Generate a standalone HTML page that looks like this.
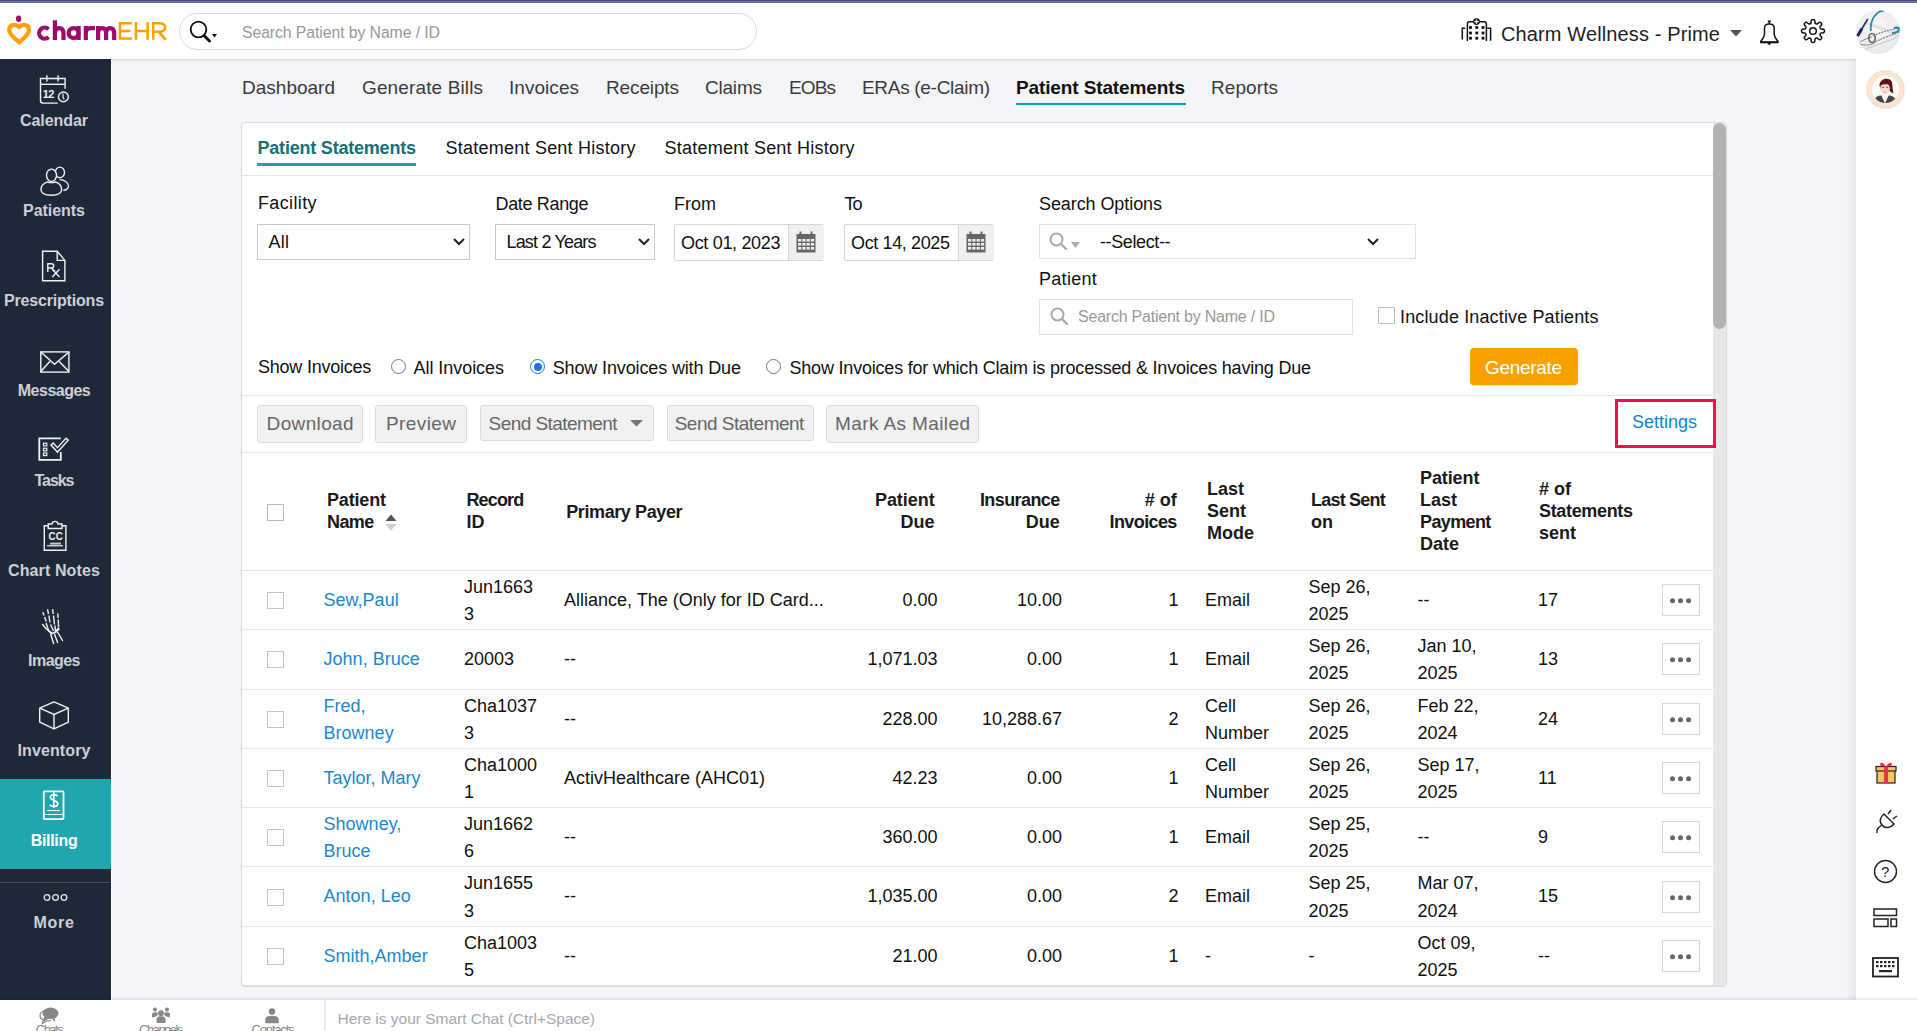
<!DOCTYPE html>
<html><head><meta charset="utf-8"><style>
html,body{margin:0;padding:0;}
body{width:1917px;height:1031px;position:relative;overflow:hidden;background:#f4f5f9;font-family:"Liberation Sans", sans-serif;}
.t{position:absolute;white-space:pre;line-height:1;}
svg{position:absolute;overflow:visible;}
</style></head><body>
<div style="position:absolute;left:0px;top:0px;width:1917px;height:1px;background:#4a4d7c;"></div>
<div style="position:absolute;left:0px;top:1px;width:1917px;height:1px;background:#72759b;"></div>
<div style="position:absolute;left:0px;top:2px;width:1917px;height:1px;background:#6a6c93;"></div>
<div style="position:absolute;left:0px;top:3px;width:1917px;height:56px;background:#fff;"></div>
<div style="position:absolute;left:0px;top:59px;width:1917px;height:1px;background:#e0e0e3;"></div>
<div style="position:absolute;left:0px;top:60px;width:1917px;height:3px;background:linear-gradient(#ebebee,#f4f5f9);"></div>
<div style="position:absolute;left:0px;top:59px;width:111px;height:941px;background:#1d2839;"></div>
<div style="position:absolute;left:111px;top:59px;width:1px;height:941px;background:#fff;"></div>
<div style="position:absolute;left:0px;top:779px;width:111px;height:90px;background:#20a7ad;"></div>
<div style="position:absolute;left:0px;top:882px;width:111px;height:1px;background:#4b4a4d;"></div>
<div style="position:absolute;left:1846px;top:59px;width:10px;height:941px;background:linear-gradient(90deg,rgba(0,0,0,0),rgba(0,0,0,0.06));"></div>
<div style="position:absolute;left:1856px;top:59px;width:61px;height:941px;background:#fff;"></div>
<div style="position:absolute;left:0px;top:995px;width:1917px;height:5px;background:linear-gradient(rgba(0,0,0,0),rgba(0,0,0,0.035) 60%,rgba(0,0,0,0.09));"></div>
<div style="position:absolute;left:0px;top:1000px;width:1917px;height:31px;background:#fff;"></div>
<div style="position:absolute;left:324px;top:1000px;width:2px;height:31px;background:#ececf0;"></div>
<svg style="left:4px;top:12px" width="30" height="36" viewBox="0 0 30 36">
<ellipse cx="14.6" cy="6.8" rx="2.6" ry="3.3" fill="#9d0a6c"/>
<path d="M15.2 15 C 12 11.5, 5.2 12, 5.2 18 C 5.2 22.5, 11 26.8, 15.3 30.3 C 19.5 26.8, 25 22.5, 25 18 C 25 12, 18.5 11.5, 15.2 15 Z" fill="none" stroke="#ffa000" stroke-width="4.2" stroke-linejoin="round"/>
</svg>
<svg style="left:34px;top:15px" width="140" height="30" viewBox="0 0 140 30" fill="none" stroke-linecap="butt">
<g stroke="#9d0a6c" stroke-width="4.2">
<path d="M14.5 14.2 A5.5 5.5 0 1 0 14.5 22"/>
<path d="M20.9 5.3 V25 M20.9 19 Q 20.9 13.1, 25.2 13.1 Q 29.5 13.1, 29.5 19 V25"/>
<circle cx="39.6" cy="18.1" r="4.95"/><path d="M44.6 11 V25"/>
<path d="M51.8 11 V25 M51.8 18.5 Q 51.8 13.1, 56.5 13.1 H 61"/>
<path d="M64.1 11 V25 M64.1 18.5 Q 64.1 13.1, 68.1 13.1 Q 72.1 13.1, 72.1 18.5 V25 M72.1 18.5 Q 72.1 13.1, 76.1 13.1 Q 80.2 13.1, 80.2 18.5 V25"/>
</g>
<g stroke="#ffa000" stroke-width="2.5">
<path d="M97.9 8.35 H85.95 V23.55 H97.9 M85.95 15.9 H96.5"/>
<path d="M101.95 7.1 V24.8 M113.65 7.1 V24.8 M101.95 15.9 H113.65"/>
<path d="M119.25 24.8 V8.35 H125 C 129.8 8.35, 131.2 10.5, 131.2 12.6 C 131.2 15, 129.5 16.7, 125 16.7 H119.25 M124.5 16.7 L131.9 24.8"/>
</g></svg>
<div style="position:absolute;left:179px;top:13px;width:578px;height:37px;box-sizing:border-box;border:1px solid #d8d8e0;border-radius:18.5px;background:#fff;"></div>
<svg style="left:189px;top:20px" width="30" height="24" viewBox="0 0 30 24">
<circle cx="9.5" cy="9.5" r="7.8" fill="none" stroke="#111" stroke-width="1.8"/>
<line x1="15" y1="15.5" x2="20.5" y2="21" stroke="#111" stroke-width="3" stroke-linecap="round"/>
<path d="M23 14 L28 14 L25.5 17.5 Z" fill="#111"/>
</svg>
<div class="t" id="t0" style="left:242px;top:25.03px;font-size:15.8px;font-weight:400;color:#999;letter-spacing:-0.084px;">Search Patient by Name / ID</div>
<svg style="left:1455px;top:12px" width="45" height="36" viewBox="0 0 45 36" fill="none" stroke="#111" stroke-width="1.5">
<path d="M12.4 29 V12 Q12.4 9.8 14.6 9.8 H29.2 Q31.4 9.8 31.4 12 V29"/>
<path d="M7.3 27.6 V16.2 H10.2 M35.6 28.8 V16.2 H32.3"/>
<circle cx="21.5" cy="9.6" r="3.4" fill="#111" stroke="none"/><path d="M21.5 7.4 V11.8 M19.3 9.6 H23.7" stroke="#fff" stroke-width="1.3"/>
<g fill="#111" stroke="none"><rect x="14.1" y="14.1" width="2.8" height="2.8"/><rect x="20.4" y="14.1" width="2.8" height="2.8"/><rect x="26.6" y="14.1" width="2.8" height="2.8"/>
<rect x="14.1" y="19.6" width="2.8" height="2.8"/><rect x="20.4" y="19.6" width="2.8" height="2.8"/><rect x="26.6" y="19.6" width="2.8" height="2.8"/>
<rect x="14.1" y="24.8" width="2.8" height="2.8"/><rect x="20.4" y="24.8" width="2.8" height="2.8"/><rect x="26.6" y="24.8" width="2.8" height="2.8"/></g>
</svg>
<div class="t" id="t1" style="left:1501px;top:24.07px;font-size:20px;font-weight:400;color:#222;letter-spacing:0.126px;">Charm Wellness - Prime</div>
<svg style="left:1730px;top:30px" width="12" height="7" viewBox="0 0 12 7"><path d="M0 0 H12 L6 6.5 Z" fill="#555"/></svg>
<svg style="left:1750px;top:12px" width="40" height="36" viewBox="0 0 40 36" fill="none" stroke="#111" stroke-width="1.5">
<path d="M19.3 9.3 V12 M17.8 9.3 H20.8" stroke-width="1.6"/>
<path d="M19.3 12 C 15.5 12, 14.5 13.5, 14.5 16 V22 C 14.5 24.5, 13 26.5, 10.7 29.5 V30.3 H28 V29.5 C 25.7 26.5, 24.2 24.5, 24.2 22 V16 C 24.2 13.5, 23 12, 19.3 12 Z" stroke-width="1.5"/>
<path d="M10.7 30.3 H28" stroke-width="2"/>
<path d="M18 30.5 L19.3 32.3 L20.6 30.5" stroke-width="1.4"/>
</svg>
<svg style="left:1801.4px;top:19.3px" width="24" height="24" viewBox="0 0 24 24" fill="none" stroke="#111" stroke-width="1.5">
<path d="M19.21 14.98 L19.13 15.17 L19.06 15.37 L19.00 15.57 L18.98 15.79 L19.03 16.06 L19.26 16.45 L19.70 17.00 L20.26 17.67 L20.65 18.28 L20.79 18.74 L20.75 19.09 L20.63 19.37 L20.46 19.61 L20.27 19.84 L20.06 20.06 L19.84 20.27 L19.61 20.46 L19.37 20.63 L19.09 20.75 L18.74 20.79 L18.28 20.65 L17.67 20.26 L17.00 19.70 L16.45 19.26 L16.06 19.03 L15.79 18.98 L15.57 19.00 L15.37 19.06 L15.17 19.13 L14.98 19.21 L14.80 19.29 L14.61 19.37 L14.43 19.47 L14.26 19.61 L14.10 19.85 L13.99 20.27 L13.91 20.98 L13.83 21.85 L13.67 22.56 L13.45 22.98 L13.18 23.20 L12.89 23.31 L12.60 23.36 L12.30 23.39 L12.00 23.40 L11.70 23.39 L11.40 23.36 L11.11 23.31 L10.82 23.20 L10.55 22.98 L10.33 22.56 L10.17 21.85 L10.09 20.98 L10.01 20.27 L9.90 19.85 L9.74 19.61 L9.57 19.47 L9.39 19.37 L9.20 19.29 L9.02 19.21 L8.83 19.13 L8.63 19.06 L8.43 19.00 L8.21 18.98 L7.94 19.03 L7.55 19.26 L7.00 19.70 L6.33 20.26 L5.72 20.65 L5.26 20.79 L4.91 20.75 L4.63 20.63 L4.39 20.46 L4.16 20.27 L3.94 20.06 L3.73 19.84 L3.54 19.61 L3.37 19.37 L3.25 19.09 L3.21 18.74 L3.35 18.28 L3.74 17.67 L4.30 17.00 L4.74 16.45 L4.97 16.06 L5.02 15.79 L5.00 15.57 L4.94 15.37 L4.87 15.17 L4.79 14.98 L4.71 14.80 L4.63 14.61 L4.53 14.43 L4.39 14.26 L4.15 14.10 L3.73 13.99 L3.02 13.91 L2.15 13.83 L1.44 13.67 L1.02 13.45 L0.80 13.18 L0.69 12.89 L0.64 12.60 L0.61 12.30 L0.60 12.00 L0.61 11.70 L0.64 11.40 L0.69 11.11 L0.80 10.82 L1.02 10.55 L1.44 10.33 L2.15 10.17 L3.02 10.09 L3.73 10.01 L4.15 9.90 L4.39 9.74 L4.53 9.57 L4.63 9.39 L4.71 9.20 L4.79 9.02 L4.87 8.83 L4.94 8.63 L5.00 8.43 L5.02 8.21 L4.97 7.94 L4.74 7.55 L4.30 7.00 L3.74 6.33 L3.35 5.72 L3.21 5.26 L3.25 4.91 L3.37 4.63 L3.54 4.39 L3.73 4.16 L3.94 3.94 L4.16 3.73 L4.39 3.54 L4.63 3.37 L4.91 3.25 L5.26 3.21 L5.72 3.35 L6.33 3.74 L7.00 4.30 L7.55 4.74 L7.94 4.97 L8.21 5.02 L8.43 5.00 L8.63 4.94 L8.83 4.87 L9.02 4.79 L9.20 4.71 L9.39 4.63 L9.57 4.53 L9.74 4.39 L9.90 4.15 L10.01 3.73 L10.09 3.02 L10.17 2.15 L10.33 1.44 L10.55 1.02 L10.82 0.80 L11.11 0.69 L11.40 0.64 L11.70 0.61 L12.00 0.60 L12.30 0.61 L12.60 0.64 L12.89 0.69 L13.18 0.80 L13.45 1.02 L13.67 1.44 L13.83 2.15 L13.91 3.02 L13.99 3.73 L14.10 4.15 L14.26 4.39 L14.43 4.53 L14.61 4.63 L14.80 4.71 L14.98 4.79 L15.17 4.87 L15.37 4.94 L15.57 5.00 L15.79 5.02 L16.06 4.97 L16.45 4.74 L17.00 4.30 L17.67 3.74 L18.28 3.35 L18.74 3.21 L19.09 3.25 L19.37 3.37 L19.61 3.54 L19.84 3.73 L20.06 3.94 L20.27 4.16 L20.46 4.39 L20.63 4.63 L20.75 4.91 L20.79 5.26 L20.65 5.72 L20.26 6.33 L19.70 7.00 L19.26 7.55 L19.03 7.94 L18.98 8.21 L19.00 8.43 L19.06 8.63 L19.13 8.83 L19.21 9.02 L19.29 9.20 L19.37 9.39 L19.47 9.57 L19.61 9.74 L19.85 9.90 L20.27 10.01 L20.98 10.09 L21.85 10.17 L22.56 10.33 L22.98 10.55 L23.20 10.82 L23.31 11.11 L23.36 11.40 L23.39 11.70 L23.40 12.00 L23.39 12.30 L23.36 12.60 L23.31 12.89 L23.20 13.18 L22.98 13.45 L22.56 13.67 L21.85 13.83 L20.98 13.91 L20.27 13.99 L19.85 14.10 L19.61 14.26 L19.47 14.43 L19.37 14.61 L19.29 14.80 L19.21 14.98 Z"/><circle cx="12" cy="12" r="3.3"/></svg>
<div style="position:absolute;left:1856px;top:9.5px;width:44px;height:44px;border-radius:50%;background:radial-gradient(circle at 45% 40%,#f7f7f8 0%,#ededf0 60%,#dcdce0 100%);overflow:hidden">
<svg style="left:0;top:0" width="44" height="44" viewBox="0 0 44 44" fill="none">
<path d="M4 42 C 14 36, 30 33, 44 26" stroke="#cfcfd4" stroke-width="1.5"/>
<path d="M8 12 C 18 16, 34 20, 44 28" stroke="#e2e2e6" stroke-width="3"/>
<path d="M1.5 26 L11.8 9" stroke="#2a2f6a" stroke-width="1.6"/><path d="M1.5 26 L6 18.5" stroke="#1d2256" stroke-width="3"/>
<path d="M14.8 21 C 14 10, 20 1, 28 0.6" stroke="#2a8aa8" stroke-width="1.8"/>
<path d="M17 26 C 25 22, 33 20, 43.5 18" stroke="#777" stroke-width="1.1" stroke-dasharray="2 1"/>
<path d="M19 32 C 27 28, 35 25, 43.5 22" stroke="#777" stroke-width="1.1" stroke-dasharray="2 1"/>
<path d="M38 18 C 40 17, 43 17.5, 43.5 19 C 43 21, 40 23, 36 23" stroke="#2a8aa8" stroke-width="2"/>
<path d="M4 32 C 8 29, 13 28, 16 27 M4 34 C 9 36, 14 35, 19 33" stroke="#888" stroke-width="1"/>
<ellipse cx="16" cy="28" rx="3.2" ry="4.5" stroke="#666" stroke-width="1.6"/>
</svg></div>
<div class="t" id="t2" style="left:-246px;width:600px;text-align:center;top:113.06px;font-size:16px;font-weight:700;color:#cfd0d5;letter-spacing:-0.067px;">Calendar</div>
<div class="t" id="t3" style="left:-246px;width:600px;text-align:center;top:203.06px;font-size:16px;font-weight:700;color:#cfd0d5;letter-spacing:-0.036px;">Patients</div>
<div class="t" id="t4" style="left:-246px;width:600px;text-align:center;top:293.06px;font-size:16px;font-weight:700;color:#cfd0d5;letter-spacing:-0.189px;">Prescriptions</div>
<div class="t" id="t5" style="left:-246px;width:600px;text-align:center;top:383.06px;font-size:16px;font-weight:700;color:#cfd0d5;letter-spacing:-0.500px;">Messages</div>
<div class="t" id="t6" style="left:-246px;width:600px;text-align:center;top:473.06px;font-size:16px;font-weight:700;color:#cfd0d5;letter-spacing:-1.047px;">Tasks</div>
<div class="t" id="t7" style="left:-246px;width:600px;text-align:center;top:563.06px;font-size:16px;font-weight:700;color:#cfd0d5;letter-spacing:0.101px;">Chart Notes</div>
<div class="t" id="t8" style="left:-246px;width:600px;text-align:center;top:653.06px;font-size:16px;font-weight:700;color:#cfd0d5;letter-spacing:-0.548px;">Images</div>
<div class="t" id="t9" style="left:-246px;width:600px;text-align:center;top:743.06px;font-size:16px;font-weight:700;color:#cfd0d5;letter-spacing:0.123px;">Inventory</div>
<div class="t" id="t10" style="left:-246px;width:600px;text-align:center;top:833.06px;font-size:16px;font-weight:700;color:#fff;letter-spacing:-0.315px;">Billing</div>
<div class="t" id="t11" style="left:-246px;width:600px;text-align:center;top:915.26px;font-size:16px;font-weight:700;color:#cfd0d5;letter-spacing:0.755px;">More</div>
<svg style="left:30px;top:68px" width="45" height="40" viewBox="0 0 45 40" fill="none" stroke="#f2f2f2" stroke-width="1.4" stroke-width="1.6">
<path d="M27.7 35.1 H13 Q10.5 35.1 10.5 32.6 V10.5 H35.1 V20.75"/><path d="M10.5 16.3 H35.1"/><path d="M16.9 7.2 V13.6 M28.1 7.2 V13.6"/>
<text x="12.8" y="30" font-family="Liberation Sans" font-size="11" font-weight="700" fill="#f2f2f2" stroke="none" letter-spacing="-0.6">12</text>
<circle cx="33.4" cy="28.9" r="4.9"/><path d="M33 25.5 V29.5 L34.3 31.3" stroke-width="1.2"/></svg>
<svg style="left:30px;top:160px" width="45" height="40" viewBox="0 0 45 40" fill="none" stroke="#f2f2f2" stroke-width="1.4" stroke-width="1.5">
<ellipse cx="29.9" cy="12.4" rx="4.6" ry="5.3"/>
<path d="M29.5 19.6 C 34 19.5, 38.5 22.5, 38.5 26 C 38.5 28.5, 36 30.5, 33.3 30.2"/>
<ellipse cx="21.5" cy="15.3" rx="5" ry="6.2" fill="#1e2838"/>
<path d="M17.5 21.8 C 14 23, 11 26, 11 29.5 C 11 33.5, 15.5 35.3, 21.3 35.3 C 27.5 35.3, 31.6 33.5, 31.6 29.5 C 31.6 26, 29 23, 25.5 21.8 C 24 22.8, 19 22.8, 17.5 21.8 Z" fill="#1e2838"/></svg>
<svg style="left:30px;top:240px" width="45" height="45" viewBox="0 0 45 45" fill="none" stroke="#f2f2f2" stroke-width="1.4" stroke-width="1.5">
<path d="M12.6 11.2 H27.2 L34.9 20.4 V40.7 H12.6 Z"/><path d="M27.2 11.2 V20.4 H34.9"/>
<path d="M17.8 32 V23.8 H21.3 C 24.5 23.8, 24.5 28, 21.3 28 H17.8 M21.5 28 L25 31.5" stroke-width="1.4"/>
<path d="M22.3 29.2 L29.5 37 M29.5 29.2 L22.3 37" stroke-width="1.4"/></svg>
<svg style="left:30px;top:340px" width="45" height="40" viewBox="0 0 45 40" fill="none" stroke="#f2f2f2" stroke-width="1.4" stroke-width="1.8">
<rect x="10.8" y="11.9" width="28.1" height="20.2"/><path d="M10.8 12 L24.5 24.3 L39 12" stroke-width="1.5"/><path d="M19.8 21.5 L10.8 31.5 M29.2 21.5 L39 31.5" stroke-width="1.5"/></svg>
<svg style="left:30px;top:430px" width="45" height="35" viewBox="0 0 45 35" fill="none" stroke="#f2f2f2" stroke-width="1.4">
<path d="M30.8 8.3 H9.3 V29.9 H30.8 V22" stroke-width="1.8"/>
<rect x="13.5" y="13.2" width="3.3" height="2.6" stroke-width="1.2"/><rect x="13.5" y="18.2" width="3.3" height="2.6" stroke-width="1.2"/><rect x="13.5" y="23" width="3.3" height="2.6" stroke-width="1.2"/>
<path d="M21.6 13.4 L27.5 19.9 L37.6 8.6" stroke-width="4.4" stroke-linejoin="miter"/>
<path d="M22.6 14.5 L27.5 19.9 L36.6 9.7" stroke="#1e2838" stroke-width="1.6" stroke-linejoin="miter"/></svg>
<svg style="left:30px;top:510px" width="45" height="45" viewBox="0 0 45 45" fill="none" stroke="#f2f2f2" stroke-width="1.4" stroke-width="1.5">
<path d="M18.2 15.7 H14.3 V40.3 H35.9 V15.7 H32"/><path d="M18.2 18.5 V14 H22 C 22.5 10.5, 27.5 10.5, 28 14 H32 V18.5 Z"/>
<text x="18.6" y="29.9" font-family="Liberation Sans" font-size="11.5" font-weight="700" fill="#f2f2f2" stroke="none" letter-spacing="0.2" transform="translate(18.6 0) scale(0.85 1) translate(-18.6 0)">CC</text>
<path d="M20 33.6 H31" stroke-width="2" stroke="#c8c8c8"/><path d="M17 35.8 H33" stroke-width="1.2"/></svg>
<svg style="left:30px;top:600px" width="45" height="50" viewBox="0 0 45 50" fill="none" stroke="#f2f2f2" stroke-width="1.4" stroke-width="1.9">
<path d="M12.8 12.2 L14 15.5 M14.6 17 L16.3 21.5" />
<path d="M17.5 9.3 L18.5 14 M18.9 15.5 L20 22.5"/>
<path d="M22.6 9.2 L23.2 14 M23.5 15.5 L24.5 24.5"/>
<path d="M27.8 13.2 L28 18 M28.2 19.5 L28.6 27.5"/>
<path d="M12.3 24 L15 27.5 L18 30.5"/>
<path d="M16 23 L19 31.5 L22 33 M20.5 24.5 L23.5 31 M25 25.5 L25.5 31.5 L28.5 28"/>
<path d="M18.5 30.5 L22 33.5 L26 32 L29.5 28.5" stroke-width="1.6"/>
<path d="M20.5 33.5 L23.8 44 M24.5 34 L27.8 43 M27.5 32 L32.8 41" stroke-width="1.4"/></svg>
<svg style="left:30px;top:690px" width="45" height="45" viewBox="0 0 45 45" fill="none" stroke="#f2f2f2" stroke-width="1.4" stroke-width="1.8">
<path d="M24 11.9 L38.3 18.2 V32.2 L24 38.8 L9.7 32.2 V18.2 Z" stroke-linejoin="round"/><path d="M9.7 18.2 L24 24.4 L38.3 18.2 M24 24.4 V38.8"/></svg>
<svg style="left:30px;top:780px" width="45" height="45" viewBox="0 0 45 45" fill="none" stroke="#fff" stroke-width="1.8">
<rect x="13.8" y="11.3" width="19.7" height="27.8" rx="0.8"/><path d="M17.2 30.5 H29.8 M15.3 34.5 H32" stroke-width="1.2"/>
<path d="M27.5 16.2 C 26.5 14.2, 20.5 13.8, 20.3 17.2 C 20.2 20.5, 27.8 20, 27.8 23.8 C 27.8 27.3, 21 27.3, 19.8 24.6 M23.8 12.2 V28" stroke-width="1.6"/></svg>
<svg style="left:43px;top:893px" width="26" height="9" viewBox="0 0 26 9" fill="none" stroke="#e8e8e8" stroke-width="1.3">
<circle cx="4" cy="4.5" r="2.8"/><circle cx="12.5" cy="4.5" r="2.8"/><circle cx="21" cy="4.5" r="2.8"/></svg>
<svg style="left:38px;top:1006px" width="22" height="19" viewBox="0 0 22 19" fill="#888">
<ellipse cx="12.5" cy="7.3" rx="8" ry="5.8"/><path d="M6.5 10.5 L4.5 16.5 L10.5 12.5 Z"/>
<path d="M6.3 4.5 C 3.5 5.5, 2 7.5, 2 9.5 C 2 11.5, 3.5 13.2, 5.5 14 L4.5 17.5 L9 14.8 C 10.5 15, 12 14.7, 13 14.2" fill="none" stroke="#888" stroke-width="1.2"/>
<path d="M14 13 L17.5 16 L16.5 12 Z"/></svg>
<svg style="left:151px;top:1007px" width="20" height="17" viewBox="0 0 20 17" fill="#888">
<circle cx="10" cy="6.2" r="2.9"/><circle cx="4" cy="2.6" r="2"/><circle cx="16" cy="2.6" r="2"/>
<path d="M5.5 16 V12.5 C 5.5 10, 7.5 9.3, 10 9.3 C 12.5 9.3, 14.5 10, 14.5 12.5 V16 Z"/>
<path d="M1 10.5 V7.5 C 1 5.5, 2.5 5.2, 4 5.2 C 5.5 5.2, 6.3 5.5, 6.8 6.5 C 6.8 8, 6 9, 5 9.5 Z"/>
<path d="M19 10.5 V7.5 C 19 5.5, 17.5 5.2, 16 5.2 C 14.5 5.2, 13.7 5.5, 13.2 6.5 C 13.2 8, 14 9, 15 9.5 Z"/></svg>
<svg style="left:264px;top:1007px" width="17" height="17" viewBox="0 0 17 17" fill="#888">
<circle cx="8" cy="4.5" r="3.2"/><path d="M1.3 16 V12.5 C 1.3 10, 3.5 8.8, 8 8.8 C 12.5 8.8, 14.7 10, 14.7 12.5 V16 Q 14.7 16.2, 14 16.2 H 2 Q 1.3 16.2, 1.3 16 Z"/></svg>
<div class="t" id="t12" style="left:-251px;width:600px;text-align:center;top:1023.00px;font-size:13px;font-weight:400;color:#888;letter-spacing:-1.492px;">Chats</div>
<div class="t" id="t13" style="left:-139.5px;width:600px;text-align:center;top:1023.00px;font-size:13px;font-weight:400;color:#888;letter-spacing:-1.491px;">Channels</div>
<div class="t" id="t14" style="left:-27.5px;width:600px;text-align:center;top:1023.00px;font-size:13px;font-weight:400;color:#888;letter-spacing:-1.188px;">Contacts</div>
<div class="t" id="t15" style="left:337.5px;top:1011.48px;font-size:15.5px;font-weight:400;color:#a5a9b2;letter-spacing:-0.014px;">Here is your Smart Chat (Ctrl+Space)</div>
<div style="position:absolute;left:1866.5px;top:71px;width:37px;height:37px;border-radius:50%;background:#fde6cf;box-shadow:0 0 1.5px rgba(0,0,0,0.35);"></div>
<div style="position:absolute;left:1871.5px;top:76px;width:27px;height:27px;border-radius:50%;background:#fff;overflow:hidden">
<svg style="left:0;top:0" width="27" height="27" viewBox="0 0 27 27">
<path d="M7.5 10 C 7 3, 16 0.5, 19.5 5 C 21 8, 20 13, 21.5 17 C 19.5 17, 18 16, 17.5 14 L9 14 Z" fill="#5a1414"/>
<ellipse cx="13" cy="12.5" rx="4.8" ry="5.8" fill="#fadcd2"/>
<path d="M8 9.5 C 9 6, 17 5.5, 18.5 9 C 16 8, 11 8, 8 9.5 Z" fill="#5a1414"/>
<path d="M10 11.3 H12 M14.2 11.3 H16.2" stroke="#333" stroke-width="0.8"/>
<ellipse cx="13" cy="16" rx="1" ry="0.6" fill="#f08aa0"/>
<path d="M1.5 27 C 2 22, 5 19.5, 9.5 19.5 L13 27 Z" fill="#44464d"/><path d="M24.5 27 C 24 22, 21 19.5, 16.5 19.5 L13 27 Z" fill="#44464d"/>
<path d="M9.5 19.5 H16.5 L13 27 Z" fill="#f2f2f4"/>
</svg></div>
<svg style="left:1875px;top:761px" width="22" height="23" viewBox="0 0 22 23">
<rect x="2" y="9" width="18" height="13" fill="#f8c463" stroke="#222" stroke-width="1.2"/>
<rect x="1" y="5.5" width="20" height="4.5" fill="#f8c463" stroke="#222" stroke-width="1.2"/>
<rect x="9" y="5.5" width="4" height="16.5" fill="#e8334f"/>
<path d="M11 5.5 C 8 1, 5 1, 5 3.5 C 5 5, 9 5.5, 11 5.5 C 13 5.5, 17 5, 17 3.5 C 17 1, 14 1, 11 5.5 Z" fill="#e8334f"/></svg>
<svg style="left:1875px;top:808px" width="24" height="26" viewBox="0 0 24 26" fill="none" stroke="#222" stroke-width="1.5">
<path d="M9 6 L19 16 C 16 20, 10 21, 7 17 C 4 14, 5 9, 9 6 Z"/><path d="M13 6 L16 2 M18 11 L22 8"/>
<path d="M7 17 C 4 19, 1 21, 2 25"/></svg>
<svg style="left:1873px;top:859px" width="25" height="25" viewBox="0 0 25 25" fill="none" stroke="#222" stroke-width="1.4">
<circle cx="12.5" cy="12.5" r="11"/>
<text x="8" y="18" font-family="Liberation Sans" font-size="15" fill="#222" stroke="none">?</text></svg>
<svg style="left:1873px;top:908px" width="25" height="20" viewBox="0 0 25 20" fill="none" stroke="#222" stroke-width="1.5">
<rect x="1" y="1" width="22.5" height="6.5"/><rect x="1" y="11" width="14" height="7.5"/><rect x="18" y="11" width="5.5" height="7.5"/></svg>
<svg style="left:1872px;top:957px" width="27" height="21" viewBox="0 0 27 21">
<rect x="1" y="1" width="25" height="18.5" fill="none" stroke="#222" stroke-width="1.8"/>
<g fill="#222"><rect x="4" y="4" width="2.5" height="2.2"/><rect x="8" y="4" width="2.5" height="2.2"/><rect x="12" y="4" width="2.5" height="2.2"/><rect x="16" y="4" width="2.5" height="2.2"/><rect x="20" y="4" width="2.5" height="2.2"/>
<rect x="4" y="8" width="2.5" height="2.2"/><rect x="8" y="8" width="2.5" height="2.2"/><rect x="12" y="8" width="2.5" height="2.2"/><rect x="16" y="8" width="2.5" height="2.2"/><rect x="20" y="8" width="2.5" height="2.2"/>
<rect x="7" y="13" width="13" height="2.2"/></g></svg>
<div class="t" id="t16" style="left:242px;top:77.92px;font-size:19px;font-weight:400;color:#3a3a3a;letter-spacing:0.006px;">Dashboard</div>
<div class="t" id="t17" style="left:362px;top:77.92px;font-size:19px;font-weight:400;color:#3a3a3a;letter-spacing:0.127px;">Generate Bills</div>
<div class="t" id="t18" style="left:509px;top:77.92px;font-size:19px;font-weight:400;color:#3a3a3a;letter-spacing:0.042px;">Invoices</div>
<div class="t" id="t19" style="left:606px;top:77.92px;font-size:19px;font-weight:400;color:#3a3a3a;letter-spacing:-0.132px;">Receipts</div>
<div class="t" id="t20" style="left:705px;top:77.92px;font-size:19px;font-weight:400;color:#3a3a3a;letter-spacing:-0.212px;">Claims</div>
<div class="t" id="t21" style="left:789px;top:77.92px;font-size:19px;font-weight:400;color:#3a3a3a;letter-spacing:-0.875px;">EOBs</div>
<div class="t" id="t22" style="left:862px;top:77.92px;font-size:19px;font-weight:400;color:#3a3a3a;letter-spacing:-0.304px;">ERAs (e-Claim)</div>
<div class="t" id="t23" style="left:1211px;top:77.92px;font-size:19px;font-weight:400;color:#3a3a3a;letter-spacing:0.078px;">Reports</div>
<div class="t" id="t24" style="left:1016px;top:77.92px;font-size:19px;font-weight:700;color:#111;letter-spacing:-0.120px;">Patient Statements</div>
<div style="position:absolute;left:1016px;top:103px;width:170px;height:2px;background:#0ea3a8;"></div>
<div style="position:absolute;left:241px;top:122px;width:1486px;height:864px;box-sizing:border-box;border:1px solid #dcdce0;border-radius:4px;background:#fff;box-shadow:0 1px 1px rgba(0,0,0,0.1);"></div>
<div style="position:absolute;left:1713px;top:123px;width:13px;height:862px;background:#e8e8e8;border-radius:0 3px 3px 0;"></div>
<div style="position:absolute;left:1713px;top:123px;width:13px;height:206px;background:#b3b3b3;border-radius:7px;"></div>
<div class="t" id="t25" style="left:257.5px;top:138.76px;font-size:18px;font-weight:700;color:#176f78;letter-spacing:-0.209px;">Patient Statements</div>
<div style="position:absolute;left:257px;top:163px;width:159px;height:3px;background:#20a1ab;"></div>
<div class="t" id="t26" style="left:445.5px;top:138.76px;font-size:18px;font-weight:400;color:#111;letter-spacing:0.234px;">Statement Sent History</div>
<div class="t" id="t27" style="left:664.5px;top:138.76px;font-size:18px;font-weight:400;color:#111;letter-spacing:0.234px;">Statement Sent History</div>
<div style="position:absolute;left:242px;top:175px;width:1471px;height:1px;background:#e6e6e6;"></div>
<div class="t" id="t28" style="left:258px;top:194.26px;font-size:18px;font-weight:400;color:#111;letter-spacing:0.355px;">Facility</div>
<div class="t" id="t29" style="left:495.5px;top:194.76px;font-size:18px;font-weight:400;color:#111;letter-spacing:-0.342px;">Date Range</div>
<div class="t" id="t30" style="left:674px;top:194.76px;font-size:18px;font-weight:400;color:#111;">From</div>
<div class="t" id="t31" style="left:844.5px;top:194.76px;font-size:18px;font-weight:400;color:#111;letter-spacing:-1.016px;">To</div>
<div class="t" id="t32" style="left:1039px;top:194.76px;font-size:18px;font-weight:400;color:#111;letter-spacing:-0.083px;">Search Options</div>
<div style="position:absolute;left:257px;top:224px;width:213px;height:36px;box-sizing:border-box;border:1px solid #c9c9c9;background:#fff;"></div>
<div class="t" id="t33" style="left:268.5px;top:232.76px;font-size:18px;font-weight:400;color:#111;letter-spacing:0.242px;">All</div>
<svg style="left:453px;top:238px" width="12" height="8" viewBox="0 0 12 8"><path d="M1 1 L6 6 L11 1" fill="none" stroke="#222" stroke-width="2"/></svg>
<div style="position:absolute;left:495px;top:224px;width:160px;height:36px;box-sizing:border-box;border:1px solid #c9c9c9;background:#fff;"></div>
<div class="t" id="t34" style="left:506.5px;top:232.76px;font-size:18px;font-weight:400;color:#111;letter-spacing:-0.827px;">Last 2 Years</div>
<svg style="left:638px;top:238px" width="12" height="8" viewBox="0 0 12 8"><path d="M1 1 L6 6 L11 1" fill="none" stroke="#222" stroke-width="2"/></svg>
<div style="position:absolute;left:674px;top:224px;width:150px;height:37px;box-sizing:border-box;border:1px solid #d6d6d6;border-radius:2px;background:#fff;"></div>
<div style="position:absolute;left:788px;top:225px;width:35px;height:35px;background:#f0f0f0;border-left:1px solid #d6d6d6;"></div>
<div class="t" id="t35" style="left:681px;top:233.76px;font-size:18px;font-weight:400;color:#111;letter-spacing:-0.325px;">Oct 01, 2023</div>
<svg style="left:796px;top:231px" width="20" height="22" viewBox="0 0 20 22">
<rect x="0.5" y="3" width="19" height="18.5" fill="#666"/><rect x="3.5" y="0.5" width="2" height="4" fill="#666"/><rect x="14.5" y="0.5" width="2" height="4" fill="#666"/>
<g fill="#f0f0f0"><rect x="2" y="8" width="3.2" height="2.6"/><rect x="6.3" y="8" width="3.2" height="2.6"/><rect x="10.6" y="8" width="3.2" height="2.6"/><rect x="14.9" y="8" width="3.2" height="2.6"/>
<rect x="2" y="12" width="3.2" height="2.6"/><rect x="6.3" y="12" width="3.2" height="2.6"/><rect x="10.6" y="12" width="3.2" height="2.6"/><rect x="14.9" y="12" width="3.2" height="2.6"/>
<rect x="2" y="16" width="3.2" height="2.6"/><rect x="6.3" y="16" width="3.2" height="2.6"/><rect x="10.6" y="16" width="3.2" height="2.6"/><rect x="14.9" y="16" width="3.2" height="2.6"/></g></svg>
<div style="position:absolute;left:844px;top:224px;width:150px;height:37px;box-sizing:border-box;border:1px solid #d6d6d6;border-radius:2px;background:#fff;"></div>
<div style="position:absolute;left:958px;top:225px;width:35px;height:35px;background:#f0f0f0;border-left:1px solid #d6d6d6;"></div>
<div class="t" id="t36" style="left:851px;top:233.76px;font-size:18px;font-weight:400;color:#111;letter-spacing:-0.371px;">Oct 14, 2025</div>
<svg style="left:966px;top:231px" width="20" height="22" viewBox="0 0 20 22">
<rect x="0.5" y="3" width="19" height="18.5" fill="#666"/><rect x="3.5" y="0.5" width="2" height="4" fill="#666"/><rect x="14.5" y="0.5" width="2" height="4" fill="#666"/>
<g fill="#f0f0f0"><rect x="2" y="8" width="3.2" height="2.6"/><rect x="6.3" y="8" width="3.2" height="2.6"/><rect x="10.6" y="8" width="3.2" height="2.6"/><rect x="14.9" y="8" width="3.2" height="2.6"/>
<rect x="2" y="12" width="3.2" height="2.6"/><rect x="6.3" y="12" width="3.2" height="2.6"/><rect x="10.6" y="12" width="3.2" height="2.6"/><rect x="14.9" y="12" width="3.2" height="2.6"/>
<rect x="2" y="16" width="3.2" height="2.6"/><rect x="6.3" y="16" width="3.2" height="2.6"/><rect x="10.6" y="16" width="3.2" height="2.6"/><rect x="14.9" y="16" width="3.2" height="2.6"/></g></svg>
<div style="position:absolute;left:1039px;top:224px;width:377px;height:35px;box-sizing:border-box;border:1px solid #e2e2e2;background:#fff;"></div>
<svg style="left:1049px;top:232px" width="32" height="18" viewBox="0 0 32 18">
<circle cx="7.5" cy="7.5" r="6" fill="none" stroke="#aaa" stroke-width="2"/><line x1="12" y1="12" x2="17" y2="17" stroke="#aaa" stroke-width="2.4" stroke-linecap="round"/>
<path d="M22 10 L31 10 L26.5 16 Z" fill="#aaa"/></svg>
<div class="t" id="t37" style="left:1100px;top:232.76px;font-size:18px;font-weight:400;color:#111;letter-spacing:-0.391px;">--Select--</div>
<svg style="left:1367px;top:238px" width="12" height="8" viewBox="0 0 12 8"><path d="M1 1 L6 6 L11 1" fill="none" stroke="#222" stroke-width="2"/></svg>
<div class="t" id="t38" style="left:1039px;top:269.76px;font-size:18px;font-weight:400;color:#111;letter-spacing:0.292px;">Patient</div>
<div style="position:absolute;left:1039px;top:299px;width:314px;height:36px;box-sizing:border-box;border:1px solid #e2e2e2;background:#fff;"></div>
<svg style="left:1050px;top:307px" width="18" height="18" viewBox="0 0 18 18">
<circle cx="7.5" cy="7.5" r="6" fill="none" stroke="#aaa" stroke-width="2"/><line x1="12" y1="12" x2="17" y2="17" stroke="#aaa" stroke-width="2.4" stroke-linecap="round"/></svg>
<div class="t" id="t39" style="left:1078px;top:309.46px;font-size:16px;font-weight:400;color:#999;letter-spacing:-0.222px;">Search Patient by Name / ID</div>
<div style="position:absolute;left:1378px;top:307px;width:17px;height:17px;box-sizing:border-box;border:1px solid #bbb;background:#fff;border-radius:1px;"></div>
<div class="t" id="t40" style="left:1400px;top:307.96px;font-size:18px;font-weight:400;color:#111;letter-spacing:0.141px;">Include Inactive Patients</div>
<div class="t" id="t41" style="left:258px;top:357.76px;font-size:18px;font-weight:400;color:#111;letter-spacing:-0.230px;">Show Invoices</div>
<div style="position:absolute;left:391px;top:359px;width:15px;height:15px;box-sizing:border-box;border-radius:50%;border:1px solid #767676;background:#fff"></div>
<div class="t" id="t42" style="left:413.6px;top:359.16px;font-size:18px;font-weight:400;color:#111;letter-spacing:-0.059px;">All Invoices</div>
<div style="position:absolute;left:530px;top:359px;width:15px;height:15px;box-sizing:border-box;border-radius:50%;border:1px solid #1a73e8;background:#fff"><div style="position:absolute;left:2.5px;top:2.5px;width:8px;height:8px;border-radius:50%;background:#1a73e8"></div></div>
<div class="t" id="t43" style="left:552.7px;top:359.16px;font-size:18px;font-weight:400;color:#111;letter-spacing:-0.133px;">Show Invoices with Due</div>
<div style="position:absolute;left:766px;top:359px;width:15px;height:15px;box-sizing:border-box;border-radius:50%;border:1px solid #767676;background:#fff"></div>
<div class="t" id="t44" style="left:789.5px;top:359.16px;font-size:18px;font-weight:400;color:#111;letter-spacing:-0.202px;">Show Invoices for which Claim is processed &amp; Invoices having Due</div>
<div style="position:absolute;left:1470px;top:348px;width:108px;height:37px;background:#f9a100;border-radius:4px;box-shadow:0 1px 1px rgba(0,0,0,0.12);"></div>
<div class="t" id="t45" style="left:1485px;top:358.02px;font-size:19px;font-weight:400;color:#fff;letter-spacing:-0.319px;">Generate</div>
<div style="position:absolute;left:242px;top:395px;width:1471px;height:1px;background:#e6e6e6;"></div>
<div style="position:absolute;left:257px;top:405px;width:106px;height:38px;box-sizing:border-box;border:1px solid #dcdcdc;border-radius:3px;background:#f1f1f1;"></div>
<div class="t" id="t46" style="left:266.6px;top:413.92px;font-size:19px;font-weight:400;color:#666;letter-spacing:0.357px;">Download</div>
<div style="position:absolute;left:375px;top:405px;width:92px;height:38px;box-sizing:border-box;border:1px solid #dcdcdc;border-radius:3px;background:#f1f1f1;"></div>
<div class="t" id="t47" style="left:386px;top:413.92px;font-size:19px;font-weight:400;color:#666;letter-spacing:0.404px;">Preview</div>
<div style="position:absolute;left:480px;top:405px;width:174px;height:36px;box-sizing:border-box;border:1px solid #dcdcdc;border-radius:3px;background:#f1f1f1;"></div>
<div class="t" id="t48" style="left:488.6px;top:413.92px;font-size:19px;font-weight:400;color:#666;letter-spacing:-0.559px;">Send Statement</div>
<svg style="left:630px;top:420px" width="13" height="7" viewBox="0 0 13 7"><path d="M0 0 H13 L6.5 6.5 Z" fill="#777"/></svg>
<div style="position:absolute;left:667px;top:405px;width:147px;height:36px;box-sizing:border-box;border:1px solid #dcdcdc;border-radius:3px;background:#f1f1f1;"></div>
<div class="t" id="t49" style="left:674.7px;top:413.92px;font-size:19px;font-weight:400;color:#666;letter-spacing:-0.505px;">Send Statement</div>
<div style="position:absolute;left:826px;top:405px;width:153px;height:38px;box-sizing:border-box;border:1px solid #dcdcdc;border-radius:3px;background:#f1f1f1;"></div>
<div class="t" id="t50" style="left:835px;top:413.92px;font-size:19px;font-weight:400;color:#666;letter-spacing:0.394px;">Mark As Mailed</div>
<div style="position:absolute;left:1615px;top:399px;width:101px;height:49px;box-sizing:border-box;border:3px solid #fb0a4e;"></div>
<div class="t" id="t51" style="left:1632px;top:412.76px;font-size:18px;font-weight:400;color:#0c86d0;letter-spacing:-0.007px;">Settings</div>
<div style="position:absolute;left:242px;top:452px;width:1471px;height:1px;background:#e6e6e6;"></div>
<div style="position:absolute;left:267px;top:504px;width:17px;height:17px;box-sizing:border-box;border:1px solid #bbb;background:#fff;"></div>
<div class="t" id="t52" style="left:327px;top:491.36px;font-size:18px;font-weight:700;color:#1a1a1a;letter-spacing:-0.169px;">Patient</div>
<div class="t" id="t53" style="left:327px;top:513.26px;font-size:18px;font-weight:700;color:#1a1a1a;letter-spacing:-0.610px;">Name</div>
<svg style="left:385px;top:514px" width="12" height="17" viewBox="0 0 12 17"><path d="M6 0.5 L11.5 7 H0.5 Z" fill="#555"/><path d="M6 16.5 L11.5 10 H0.5 Z" fill="#ccc"/></svg>
<div class="t" id="t54" style="left:466.4px;top:491.36px;font-size:18px;font-weight:700;color:#1a1a1a;letter-spacing:-0.843px;">Record</div>
<div class="t" id="t55" style="left:466.4px;top:513.26px;font-size:18px;font-weight:700;color:#1a1a1a;">ID</div>
<div class="t" id="t56" style="left:566.2px;top:502.66px;font-size:18px;font-weight:700;color:#1a1a1a;letter-spacing:-0.391px;">Primary Payer</div>
<div class="t" id="t57" style="left:334.6px;width:600px;text-align:right;top:491.36px;font-size:18px;font-weight:700;color:#1a1a1a;letter-spacing:-0.053px;">Patient</div>
<div class="t" id="t58" style="left:334.6px;width:600px;text-align:right;top:513.26px;font-size:18px;font-weight:700;color:#1a1a1a;">Due</div>
<div class="t" id="t59" style="left:459.70000000000005px;width:600px;text-align:right;top:491.36px;font-size:18px;font-weight:700;color:#1a1a1a;letter-spacing:-0.581px;">Insurance</div>
<div class="t" id="t60" style="left:459.70000000000005px;width:600px;text-align:right;top:513.26px;font-size:18px;font-weight:700;color:#1a1a1a;">Due</div>
<div class="t" id="t61" style="left:576.7px;width:600px;text-align:right;top:491.36px;font-size:18px;font-weight:700;color:#1a1a1a;"># of</div>
<div class="t" id="t62" style="left:576.7px;width:600px;text-align:right;top:513.26px;font-size:18px;font-weight:700;color:#1a1a1a;letter-spacing:-0.621px;">Invoices</div>
<div class="t" id="t63" style="left:1207px;top:480.36px;font-size:18px;font-weight:700;color:#1a1a1a;">Last</div>
<div class="t" id="t64" style="left:1207px;top:502.16px;font-size:18px;font-weight:700;color:#1a1a1a;">Sent</div>
<div class="t" id="t65" style="left:1207px;top:523.96px;font-size:18px;font-weight:700;color:#1a1a1a;">Mode</div>
<div class="t" id="t66" style="left:1311px;top:491.36px;font-size:18px;font-weight:700;color:#1a1a1a;letter-spacing:-0.791px;">Last Sent</div>
<div class="t" id="t67" style="left:1311px;top:513.26px;font-size:18px;font-weight:700;color:#1a1a1a;">on</div>
<div class="t" id="t68" style="left:1420px;top:469.26px;font-size:18px;font-weight:700;color:#1a1a1a;letter-spacing:-0.103px;">Patient</div>
<div class="t" id="t69" style="left:1420px;top:491.06px;font-size:18px;font-weight:700;color:#1a1a1a;">Last</div>
<div class="t" id="t70" style="left:1420px;top:512.86px;font-size:18px;font-weight:700;color:#1a1a1a;letter-spacing:-0.624px;">Payment</div>
<div class="t" id="t71" style="left:1420px;top:534.66px;font-size:18px;font-weight:700;color:#1a1a1a;">Date</div>
<div class="t" id="t72" style="left:1539px;top:480.36px;font-size:18px;font-weight:700;color:#1a1a1a;"># of</div>
<div class="t" id="t73" style="left:1539px;top:502.16px;font-size:18px;font-weight:700;color:#1a1a1a;letter-spacing:-0.337px;">Statements</div>
<div class="t" id="t74" style="left:1539px;top:523.96px;font-size:18px;font-weight:700;color:#1a1a1a;">sent</div>
<div style="position:absolute;left:242px;top:570px;width:1471px;height:1px;background:#e4e4e4;"></div>
<div style="position:absolute;left:267px;top:592px;width:17px;height:17px;box-sizing:border-box;border:1px solid #c4c4c4;background:#fff;"></div>
<div class="t" id="t75" style="left:323.6px;top:591.06px;font-size:18px;font-weight:400;color:#1a88d0;">Sew,Paul</div>
<div class="t" id="t76" style="left:464px;top:577.76px;font-size:18px;font-weight:400;color:#111;">Jun1663</div>
<div class="t" id="t77" style="left:464px;top:605.26px;font-size:18px;font-weight:400;color:#111;">3</div>
<div class="t" id="t78" style="left:564px;top:591.06px;font-size:18px;font-weight:400;color:#111;">Alliance, The (Only for ID Card...</div>
<div class="t" id="t79" style="left:337.5px;width:600px;text-align:right;top:591.06px;font-size:18px;font-weight:400;color:#111;">0.00</div>
<div class="t" id="t80" style="left:462px;width:600px;text-align:right;top:591.06px;font-size:18px;font-weight:400;color:#111;">10.00</div>
<div class="t" id="t81" style="left:578.5999999999999px;width:600px;text-align:right;top:591.06px;font-size:18px;font-weight:400;color:#111;">1</div>
<div class="t" id="t82" style="left:1205px;top:591.06px;font-size:18px;font-weight:400;color:#111;">Email</div>
<div class="t" id="t83" style="left:1308.4px;top:577.76px;font-size:18px;font-weight:400;color:#111;">Sep 26,</div>
<div class="t" id="t84" style="left:1308.4px;top:605.26px;font-size:18px;font-weight:400;color:#111;">2025</div>
<div class="t" id="t85" style="left:1417.4px;top:591.06px;font-size:18px;font-weight:400;color:#111;">--</div>
<div class="t" id="t86" style="left:1538px;top:591.06px;font-size:18px;font-weight:400;color:#111;">17</div>
<div style="position:absolute;left:1662px;top:584px;width:38px;height:32px;box-sizing:border-box;border:1px solid #d6d6d6;background:#fff;"></div>
<svg style="left:1669px;top:598px" width="24" height="6" viewBox="0 0 24 6" fill="#666"><circle cx="3.5" cy="2.7" r="2.5"/><circle cx="11.5" cy="2.7" r="2.5"/><circle cx="19.6" cy="2.7" r="2.5"/></svg>
<div style="position:absolute;left:242px;top:629px;width:1471px;height:1px;background:#e8e8e8;"></div>
<div style="position:absolute;left:267px;top:651px;width:17px;height:17px;box-sizing:border-box;border:1px solid #c4c4c4;background:#fff;"></div>
<div class="t" id="t87" style="left:323.6px;top:650.16px;font-size:18px;font-weight:400;color:#1a88d0;">John, Bruce</div>
<div class="t" id="t88" style="left:464px;top:650.16px;font-size:18px;font-weight:400;color:#111;">20003</div>
<div class="t" id="t89" style="left:564px;top:650.16px;font-size:18px;font-weight:400;color:#111;">--</div>
<div class="t" id="t90" style="left:337.5px;width:600px;text-align:right;top:650.16px;font-size:18px;font-weight:400;color:#111;">1,071.03</div>
<div class="t" id="t91" style="left:462px;width:600px;text-align:right;top:650.16px;font-size:18px;font-weight:400;color:#111;">0.00</div>
<div class="t" id="t92" style="left:578.5999999999999px;width:600px;text-align:right;top:650.16px;font-size:18px;font-weight:400;color:#111;">1</div>
<div class="t" id="t93" style="left:1205px;top:650.16px;font-size:18px;font-weight:400;color:#111;">Email</div>
<div class="t" id="t94" style="left:1308.4px;top:636.86px;font-size:18px;font-weight:400;color:#111;">Sep 26,</div>
<div class="t" id="t95" style="left:1308.4px;top:664.36px;font-size:18px;font-weight:400;color:#111;">2025</div>
<div class="t" id="t96" style="left:1417.4px;top:636.86px;font-size:18px;font-weight:400;color:#111;">Jan 10,</div>
<div class="t" id="t97" style="left:1417.4px;top:664.36px;font-size:18px;font-weight:400;color:#111;">2025</div>
<div class="t" id="t98" style="left:1538px;top:650.16px;font-size:18px;font-weight:400;color:#111;">13</div>
<div style="position:absolute;left:1662px;top:643px;width:38px;height:32px;box-sizing:border-box;border:1px solid #d6d6d6;background:#fff;"></div>
<svg style="left:1669px;top:657px" width="24" height="6" viewBox="0 0 24 6" fill="#666"><circle cx="3.5" cy="2.7" r="2.5"/><circle cx="11.5" cy="2.7" r="2.5"/><circle cx="19.6" cy="2.7" r="2.5"/></svg>
<div style="position:absolute;left:242px;top:689px;width:1471px;height:1px;background:#e8e8e8;"></div>
<div style="position:absolute;left:267px;top:711px;width:17px;height:17px;box-sizing:border-box;border:1px solid #c4c4c4;background:#fff;"></div>
<div class="t" id="t99" style="left:323.6px;top:696.66px;font-size:18px;font-weight:400;color:#1a88d0;">Fred,</div>
<div class="t" id="t100" style="left:323.6px;top:724.16px;font-size:18px;font-weight:400;color:#1a88d0;">Browney</div>
<div class="t" id="t101" style="left:464px;top:696.66px;font-size:18px;font-weight:400;color:#111;">Cha1037</div>
<div class="t" id="t102" style="left:464px;top:724.16px;font-size:18px;font-weight:400;color:#111;">3</div>
<div class="t" id="t103" style="left:564px;top:709.96px;font-size:18px;font-weight:400;color:#111;">--</div>
<div class="t" id="t104" style="left:337.5px;width:600px;text-align:right;top:709.96px;font-size:18px;font-weight:400;color:#111;">228.00</div>
<div class="t" id="t105" style="left:462px;width:600px;text-align:right;top:709.96px;font-size:18px;font-weight:400;color:#111;">10,288.67</div>
<div class="t" id="t106" style="left:578.5999999999999px;width:600px;text-align:right;top:709.96px;font-size:18px;font-weight:400;color:#111;">2</div>
<div class="t" id="t107" style="left:1205px;top:696.66px;font-size:18px;font-weight:400;color:#111;">Cell</div>
<div class="t" id="t108" style="left:1205px;top:724.16px;font-size:18px;font-weight:400;color:#111;">Number</div>
<div class="t" id="t109" style="left:1308.4px;top:696.66px;font-size:18px;font-weight:400;color:#111;">Sep 26,</div>
<div class="t" id="t110" style="left:1308.4px;top:724.16px;font-size:18px;font-weight:400;color:#111;">2025</div>
<div class="t" id="t111" style="left:1417.4px;top:696.66px;font-size:18px;font-weight:400;color:#111;">Feb 22,</div>
<div class="t" id="t112" style="left:1417.4px;top:724.16px;font-size:18px;font-weight:400;color:#111;">2024</div>
<div class="t" id="t113" style="left:1538px;top:709.96px;font-size:18px;font-weight:400;color:#111;">24</div>
<div style="position:absolute;left:1662px;top:703px;width:38px;height:32px;box-sizing:border-box;border:1px solid #d6d6d6;background:#fff;"></div>
<svg style="left:1669px;top:717px" width="24" height="6" viewBox="0 0 24 6" fill="#666"><circle cx="3.5" cy="2.7" r="2.5"/><circle cx="11.5" cy="2.7" r="2.5"/><circle cx="19.6" cy="2.7" r="2.5"/></svg>
<div style="position:absolute;left:242px;top:748px;width:1471px;height:1px;background:#e8e8e8;"></div>
<div style="position:absolute;left:267px;top:770px;width:17px;height:17px;box-sizing:border-box;border:1px solid #c4c4c4;background:#fff;"></div>
<div class="t" id="t114" style="left:323.6px;top:769.26px;font-size:18px;font-weight:400;color:#1a88d0;">Taylor, Mary</div>
<div class="t" id="t115" style="left:464px;top:755.96px;font-size:18px;font-weight:400;color:#111;">Cha1000</div>
<div class="t" id="t116" style="left:464px;top:783.46px;font-size:18px;font-weight:400;color:#111;">1</div>
<div class="t" id="t117" style="left:564px;top:769.26px;font-size:18px;font-weight:400;color:#111;">ActivHealthcare (AHC01)</div>
<div class="t" id="t118" style="left:337.5px;width:600px;text-align:right;top:769.26px;font-size:18px;font-weight:400;color:#111;">42.23</div>
<div class="t" id="t119" style="left:462px;width:600px;text-align:right;top:769.26px;font-size:18px;font-weight:400;color:#111;">0.00</div>
<div class="t" id="t120" style="left:578.5999999999999px;width:600px;text-align:right;top:769.26px;font-size:18px;font-weight:400;color:#111;">1</div>
<div class="t" id="t121" style="left:1205px;top:755.96px;font-size:18px;font-weight:400;color:#111;">Cell</div>
<div class="t" id="t122" style="left:1205px;top:783.46px;font-size:18px;font-weight:400;color:#111;">Number</div>
<div class="t" id="t123" style="left:1308.4px;top:755.96px;font-size:18px;font-weight:400;color:#111;">Sep 26,</div>
<div class="t" id="t124" style="left:1308.4px;top:783.46px;font-size:18px;font-weight:400;color:#111;">2025</div>
<div class="t" id="t125" style="left:1417.4px;top:755.96px;font-size:18px;font-weight:400;color:#111;">Sep 17,</div>
<div class="t" id="t126" style="left:1417.4px;top:783.46px;font-size:18px;font-weight:400;color:#111;">2025</div>
<div class="t" id="t127" style="left:1538px;top:769.26px;font-size:18px;font-weight:400;color:#111;">11</div>
<div style="position:absolute;left:1662px;top:762px;width:38px;height:32px;box-sizing:border-box;border:1px solid #d6d6d6;background:#fff;"></div>
<svg style="left:1669px;top:776px" width="24" height="6" viewBox="0 0 24 6" fill="#666"><circle cx="3.5" cy="2.7" r="2.5"/><circle cx="11.5" cy="2.7" r="2.5"/><circle cx="19.6" cy="2.7" r="2.5"/></svg>
<div style="position:absolute;left:242px;top:807px;width:1471px;height:1px;background:#e8e8e8;"></div>
<div style="position:absolute;left:267px;top:829px;width:17px;height:17px;box-sizing:border-box;border:1px solid #c4c4c4;background:#fff;"></div>
<div class="t" id="t128" style="left:323.6px;top:814.86px;font-size:18px;font-weight:400;color:#1a88d0;">Showney,</div>
<div class="t" id="t129" style="left:323.6px;top:842.36px;font-size:18px;font-weight:400;color:#1a88d0;">Bruce</div>
<div class="t" id="t130" style="left:464px;top:814.86px;font-size:18px;font-weight:400;color:#111;">Jun1662</div>
<div class="t" id="t131" style="left:464px;top:842.36px;font-size:18px;font-weight:400;color:#111;">6</div>
<div class="t" id="t132" style="left:564px;top:828.16px;font-size:18px;font-weight:400;color:#111;">--</div>
<div class="t" id="t133" style="left:337.5px;width:600px;text-align:right;top:828.16px;font-size:18px;font-weight:400;color:#111;">360.00</div>
<div class="t" id="t134" style="left:462px;width:600px;text-align:right;top:828.16px;font-size:18px;font-weight:400;color:#111;">0.00</div>
<div class="t" id="t135" style="left:578.5999999999999px;width:600px;text-align:right;top:828.16px;font-size:18px;font-weight:400;color:#111;">1</div>
<div class="t" id="t136" style="left:1205px;top:828.16px;font-size:18px;font-weight:400;color:#111;">Email</div>
<div class="t" id="t137" style="left:1308.4px;top:814.86px;font-size:18px;font-weight:400;color:#111;">Sep 25,</div>
<div class="t" id="t138" style="left:1308.4px;top:842.36px;font-size:18px;font-weight:400;color:#111;">2025</div>
<div class="t" id="t139" style="left:1417.4px;top:828.16px;font-size:18px;font-weight:400;color:#111;">--</div>
<div class="t" id="t140" style="left:1538px;top:828.16px;font-size:18px;font-weight:400;color:#111;">9</div>
<div style="position:absolute;left:1662px;top:821px;width:38px;height:32px;box-sizing:border-box;border:1px solid #d6d6d6;background:#fff;"></div>
<svg style="left:1669px;top:835px" width="24" height="6" viewBox="0 0 24 6" fill="#666"><circle cx="3.5" cy="2.7" r="2.5"/><circle cx="11.5" cy="2.7" r="2.5"/><circle cx="19.6" cy="2.7" r="2.5"/></svg>
<div style="position:absolute;left:242px;top:866px;width:1471px;height:1px;background:#e8e8e8;"></div>
<div style="position:absolute;left:267px;top:889px;width:17px;height:17px;box-sizing:border-box;border:1px solid #c4c4c4;background:#fff;"></div>
<div class="t" id="t141" style="left:323.6px;top:887.46px;font-size:18px;font-weight:400;color:#1a88d0;">Anton, Leo</div>
<div class="t" id="t142" style="left:464px;top:874.16px;font-size:18px;font-weight:400;color:#111;">Jun1655</div>
<div class="t" id="t143" style="left:464px;top:901.66px;font-size:18px;font-weight:400;color:#111;">3</div>
<div class="t" id="t144" style="left:564px;top:887.46px;font-size:18px;font-weight:400;color:#111;">--</div>
<div class="t" id="t145" style="left:337.5px;width:600px;text-align:right;top:887.46px;font-size:18px;font-weight:400;color:#111;">1,035.00</div>
<div class="t" id="t146" style="left:462px;width:600px;text-align:right;top:887.46px;font-size:18px;font-weight:400;color:#111;">0.00</div>
<div class="t" id="t147" style="left:578.5999999999999px;width:600px;text-align:right;top:887.46px;font-size:18px;font-weight:400;color:#111;">2</div>
<div class="t" id="t148" style="left:1205px;top:887.46px;font-size:18px;font-weight:400;color:#111;">Email</div>
<div class="t" id="t149" style="left:1308.4px;top:874.16px;font-size:18px;font-weight:400;color:#111;">Sep 25,</div>
<div class="t" id="t150" style="left:1308.4px;top:901.66px;font-size:18px;font-weight:400;color:#111;">2025</div>
<div class="t" id="t151" style="left:1417.4px;top:874.16px;font-size:18px;font-weight:400;color:#111;">Mar 07,</div>
<div class="t" id="t152" style="left:1417.4px;top:901.66px;font-size:18px;font-weight:400;color:#111;">2024</div>
<div class="t" id="t153" style="left:1538px;top:887.46px;font-size:18px;font-weight:400;color:#111;">15</div>
<div style="position:absolute;left:1662px;top:881px;width:38px;height:32px;box-sizing:border-box;border:1px solid #d6d6d6;background:#fff;"></div>
<svg style="left:1669px;top:895px" width="24" height="6" viewBox="0 0 24 6" fill="#666"><circle cx="3.5" cy="2.7" r="2.5"/><circle cx="11.5" cy="2.7" r="2.5"/><circle cx="19.6" cy="2.7" r="2.5"/></svg>
<div style="position:absolute;left:242px;top:926px;width:1471px;height:1px;background:#e8e8e8;"></div>
<div style="position:absolute;left:267px;top:948px;width:17px;height:17px;box-sizing:border-box;border:1px solid #c4c4c4;background:#fff;"></div>
<div class="t" id="t154" style="left:323.6px;top:947.06px;font-size:18px;font-weight:400;color:#1a88d0;">Smith,Amber</div>
<div class="t" id="t155" style="left:464px;top:933.76px;font-size:18px;font-weight:400;color:#111;">Cha1003</div>
<div class="t" id="t156" style="left:464px;top:961.26px;font-size:18px;font-weight:400;color:#111;">5</div>
<div class="t" id="t157" style="left:564px;top:947.06px;font-size:18px;font-weight:400;color:#111;">--</div>
<div class="t" id="t158" style="left:337.5px;width:600px;text-align:right;top:947.06px;font-size:18px;font-weight:400;color:#111;">21.00</div>
<div class="t" id="t159" style="left:462px;width:600px;text-align:right;top:947.06px;font-size:18px;font-weight:400;color:#111;">0.00</div>
<div class="t" id="t160" style="left:578.5999999999999px;width:600px;text-align:right;top:947.06px;font-size:18px;font-weight:400;color:#111;">1</div>
<div class="t" id="t161" style="left:1205px;top:947.06px;font-size:18px;font-weight:400;color:#111;">-</div>
<div class="t" id="t162" style="left:1308.4px;top:947.06px;font-size:18px;font-weight:400;color:#111;">-</div>
<div class="t" id="t163" style="left:1417.4px;top:933.76px;font-size:18px;font-weight:400;color:#111;">Oct 09,</div>
<div class="t" id="t164" style="left:1417.4px;top:961.26px;font-size:18px;font-weight:400;color:#111;">2025</div>
<div class="t" id="t165" style="left:1538px;top:947.06px;font-size:18px;font-weight:400;color:#111;">--</div>
<div style="position:absolute;left:1662px;top:940px;width:38px;height:32px;box-sizing:border-box;border:1px solid #d6d6d6;background:#fff;"></div>
<svg style="left:1669px;top:954px" width="24" height="6" viewBox="0 0 24 6" fill="#666"><circle cx="3.5" cy="2.7" r="2.5"/><circle cx="11.5" cy="2.7" r="2.5"/><circle cx="19.6" cy="2.7" r="2.5"/></svg>
</body></html>
